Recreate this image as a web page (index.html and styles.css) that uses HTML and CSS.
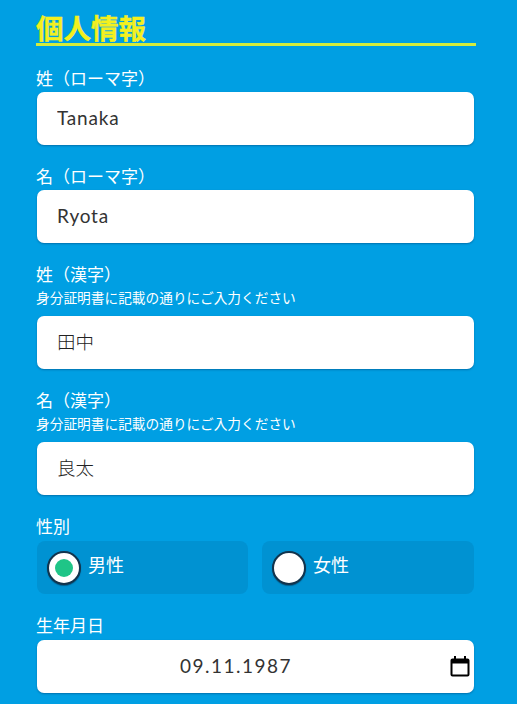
FILE: index.html
```html
<!DOCTYPE html>
<html lang="ja">
<head>
    <meta charset="UTF-8">
    <title>個人情報</title>
    <link rel="stylesheet" href="styles.css">
</head>
<body>
    <form class="container">
        <h2 class="title">個人情報</h2>

        <div class="form-group">
            <label class="label">姓（ローマ字）</label>
            <input class="text-input" type="text" value="Tanaka">
        </div>

        <div class="form-group">
            <label class="label">名（ローマ字）</label>
            <input class="text-input" type="text" value="Ryota">
        </div>

        <div class="form-group">
            <label class="label">姓（漢字）</label>
            <p class="note">身分証明書に記載の通りにご入力ください</p>
            <input class="text-input kanji" type="text" value="田中">
        </div>

        <div class="form-group">
            <label class="label">名（漢字）</label>
            <p class="note">身分証明書に記載の通りにご入力ください</p>
            <input class="text-input kanji" type="text" value="良太">
        </div>

        <div class="form-group">
            <span class="label">性別</span>
            <div class="radio-row">
                <label class="radio-box">
                    <span class="radio checked"></span>
                    <span class="radio-text">男性</span>
                </label>
                <label class="radio-box">
                    <span class="radio"></span>
                    <span class="radio-text">女性</span>
                </label>
            </div>
        </div>

        <div class="form-group">
            <label class="label date-label">生年月日</label>
            <div class="date-wrap">
                <input class="text-input date-input" type="text" value="09.11.1987">
                <svg class="date-icon" width="20" height="22" viewBox="0 0 20 22">
                    <path d="M2.5 4.5h15a1 1 0 0 1 1 1v14a1 1 0 0 1-1 1h-15a1 1 0 0 1-1-1v-14a1 1 0 0 1 1-1z" fill="none" stroke="#000" stroke-width="2"/>
                    <path d="M1.5 5h17v3.500h-17z" fill="#000"/>
                    <path d="M5 1v4M15 1v4" stroke="#000" stroke-width="2"/>
                </svg>
            </div>
        </div>
    </form>
</body>
</html>
```

FILE: styles.css
```css
* {
    box-sizing: border-box;
}

html, body {
    height: 100%;
}

body {
    margin: 0;
    background: #009fe3;
    color: #fff;
    font-family: Lato, "Noto Sans CJK JP", sans-serif;
    text-spacing-trim: space-all;
    overflow: hidden;
}

.container {
    padding: 13px 41px 0 36px;
}

.title {
    margin: 0 0 24px;
    height: 33px;
    border-bottom: 3px solid #d4ec3c;
    color: #f3f01e;
    font-family: "Noto Sans CJK JP", sans-serif;
    font-size: 27.500px;
    font-weight: 700;
    line-height: 29px;
    -webkit-text-stroke: 0.4px #f3f01e;
}

.form-group {
    margin-bottom: 23px;
}

.label {
    display: block;
    height: 22px;
    font-size: 17px;
    line-height: 18px;
}

.date-label {
    height: 23px;
}

.note {
    margin: 0 0 6px;
    height: 22px;
    font-size: 13.700px;
    line-height: 20px;
}

.text-input {
    display: block;
    width: 437px;
    height: 53px;
    margin-left: 1px;
    padding: 0 20px 3px;
    border: none;
    border-radius: 7px;
    background: #fff;
    box-shadow: 0 1px 2px rgba(0, 60, 110, 0.45);
    color: #333;
    font-family: Lato, "Noto Sans CJK JP", sans-serif;
    font-size: 19px;
    letter-spacing: 0.800px;
}

.text-input.kanji {
    font-size: 18.500px;
    font-weight: 300;
    color: #222;
    letter-spacing: 0;
}

.radio-row {
    display: grid;
    grid-template-columns: 211px 212px;
    gap: 14px;
    margin-left: 1px;
    margin-top: 1px;
}

.radio-box {
    display: flex;
    align-items: center;
    gap: 7px;
    height: 53px;
    padding-left: 10px;
    border-radius: 8px;
    background: #0092d2;
}

.radio-text {
    font-size: 18px;
    line-height: 20px;
    margin-bottom: 5px;
}

.radio {
    position: relative;
    width: 34px;
    height: 34px;
    border: 2px solid #12344d;
    border-radius: 50%;
    background: #fff;
    box-shadow: 0 1px 1px rgba(0, 40, 70, 0.5);
}

.radio.checked::after {
    content: "";
    position: absolute;
    top: 6px;
    left: 6px;
    width: 18px;
    height: 18px;
    border-radius: 50%;
    background: #1fc587;
}

.date-wrap {
    position: relative;
}

.date-input {
    padding-right: 59px;
    text-align: center;
    letter-spacing: 1.500px;
}

.date-icon {
    position: absolute;
    top: 15px;
    left: 414px;
}
```
